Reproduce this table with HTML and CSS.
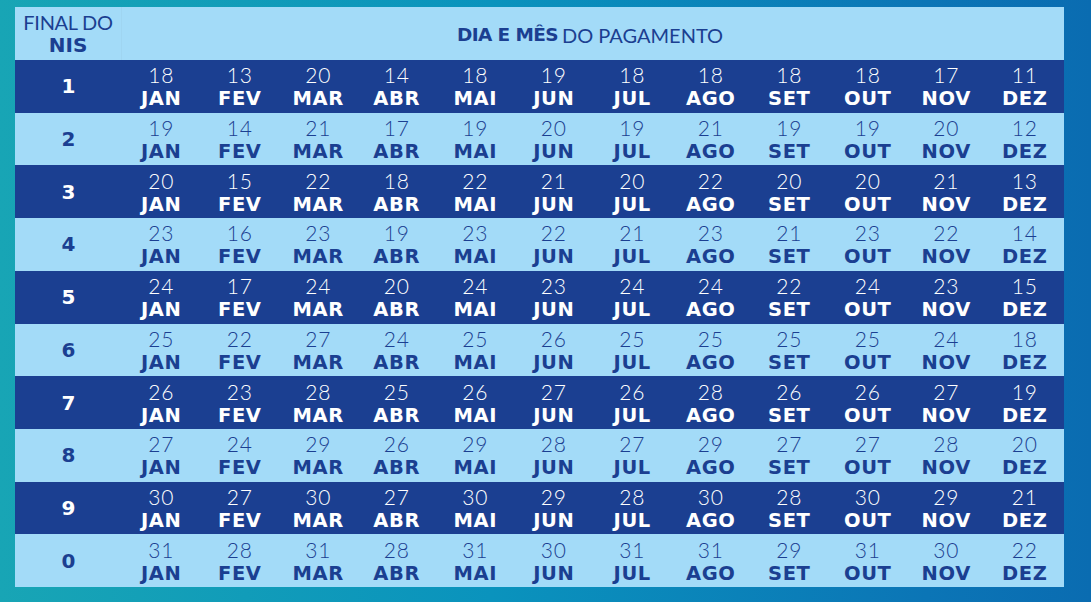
FILE: index.html
```html
<!DOCTYPE html>
<html lang="pt">
<head>
<meta charset="utf-8">
<title>Calendário de pagamento</title>
<link rel="stylesheet" href="styles.css">
</head>
<body>
<div class="page">
  <div class="table" id="table">
    <div class="head-nis"><span class="thin">FINAL DO</span><span class="bold">NIS</span></div>
    <div class="head-title"><span class="bold">DIA E MÊS</span>&nbsp;<span class="thin">DO PAGAMENTO</span></div>
  </div>
</div>
<script src="app.js"></script>
</body>
</html>
```
FILE: app.js
```js
var months = ["JAN","FEV","MAR","ABR","MAI","JUN","JUL","AGO","SET","OUT","NOV","DEZ"];
var data = [
  ["1",[18,13,20,14,18,19,18,18,18,18,17,11]],
  ["2",[19,14,21,17,19,20,19,21,19,19,20,12]],
  ["3",[20,15,22,18,22,21,20,22,20,20,21,13]],
  ["4",[23,16,23,19,23,22,21,23,21,23,22,14]],
  ["5",[24,17,24,20,24,23,24,24,22,24,23,15]],
  ["6",[25,22,27,24,25,26,25,25,25,25,24,18]],
  ["7",[26,23,28,25,26,27,26,28,26,26,27,19]],
  ["8",[27,24,29,26,29,28,27,29,27,27,28,20]],
  ["9",[30,27,30,27,30,29,28,30,28,30,29,21]],
  ["0",[31,28,31,28,31,30,31,31,29,31,30,22]]
];
var table = document.getElementById("table");
data.forEach(function (row, i) {
  var cls = i % 2 === 0 ? "dark" : "light";
  var label = document.createElement("div");
  label.className = "cell label " + cls;
  label.textContent = row[0];
  table.appendChild(label);
  row[1].forEach(function (d, m) {
    var c = document.createElement("div");
    c.className = "cell date " + cls;
    var n = document.createElement("span");
    n.className = "day";
    n.textContent = d;
    var mo = document.createElement("span");
    mo.className = "month";
    mo.textContent = months[m];
    c.appendChild(n);
    c.appendChild(mo);
    table.appendChild(c);
  });
});
```
FILE: styles.css
```css
html, body {
  margin: 0;
  padding: 0;
}
body {
  width: 1091px;
  height: 602px;
  overflow: hidden;
  background: linear-gradient(90deg, #18a5b5 0%, #0a93bd 45%, #0b75b6 85%, #0a6cb1 100%);
}
.page {
  padding: 7px 27px 15px 15px;
}
.table {
  display: grid;
  grid-template-columns: 107px repeat(12, 1fr);
  grid-template-rows: 53px repeat(10, 1fr);
  height: 580px;
  background: #a3dbf8;
  color: #1b3f91;
}
.head-nis {
  display: flex;
  flex-direction: column;
  align-items: center;
  justify-content: center;
  font-size: 20px;
  line-height: 23px;
  border-right: 1px solid #9fd5f1;
  padding-top: 1px;
}
.head-title {
  grid-column: 2 / span 12;
  display: flex;
  align-items: center;
  justify-content: center;
  padding-right: 6px;
  padding-top: 2px;
}
.thin {
  font-family: "Lato", "Liberation Sans", sans-serif;
  font-weight: 400;
  letter-spacing: -0.3px;
}
.bold {
  font-family: "DejaVu Sans", sans-serif;
  font-weight: 700;
  letter-spacing: 0;
}
.head-title .bold {
  font-size: 18.5px;
  letter-spacing: -0.6px;
}
.head-title .thin {
  font-size: 20px;
  letter-spacing: 0;
}
.cell {
  display: flex;
  align-items: center;
  justify-content: center;
}
.dark {
  background: #1b3f91;
  color: #ffffff;
}
.light {
  background: #a3dbf8;
  color: #1b3f91;
}
.label {
  font-family: "DejaVu Sans", sans-serif;
  font-weight: 700;
  font-size: 20px;
}
.date {
  flex-direction: column;
  padding-top: 4px;
}
.day {
  font-family: "Lato", "Liberation Sans", sans-serif;
  font-weight: 300;
  font-size: 21px;
  line-height: 22px;
  letter-spacing: 0.8px;
}
.month {
  font-family: "DejaVu Sans", sans-serif;
  font-weight: 700;
  font-size: 19.5px;
  line-height: 26px;
  letter-spacing: 0.6px;
}
```
